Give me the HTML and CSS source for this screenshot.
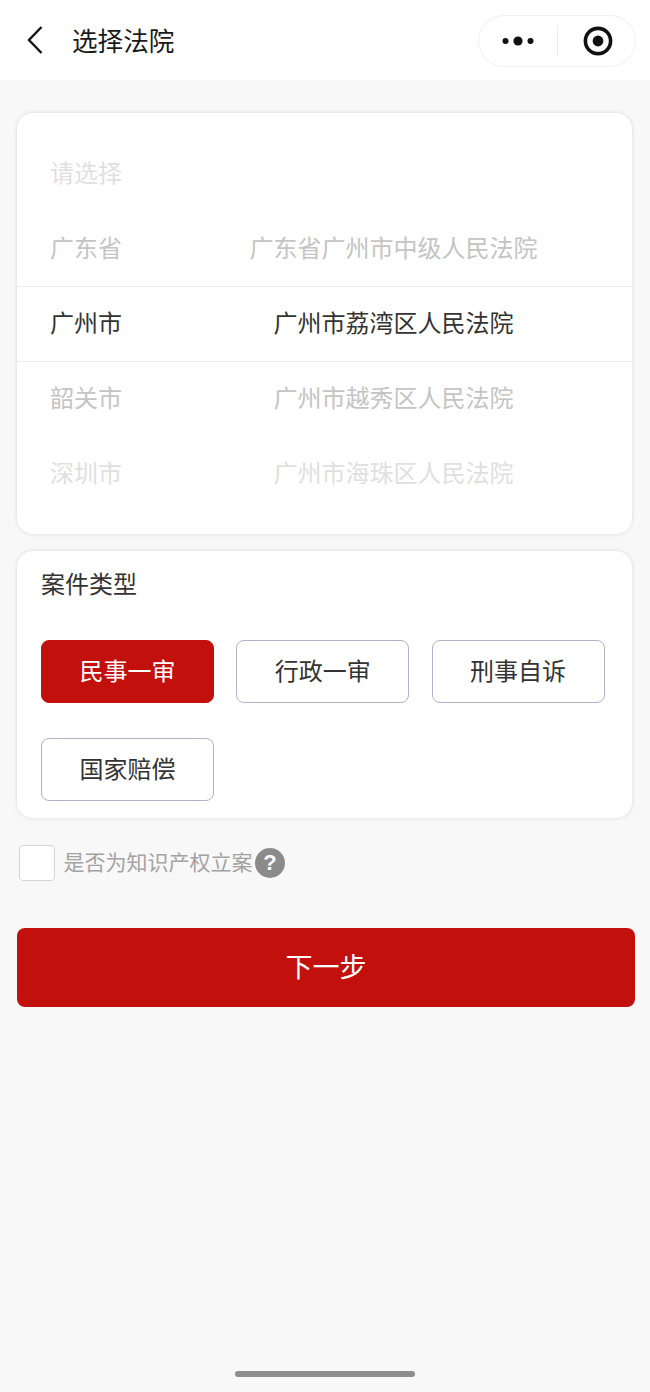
FILE: index.html
```html
<!DOCTYPE html>
<html lang="zh-CN">
<head>
<meta charset="utf-8">
<title>选择法院</title>
<link rel="stylesheet" href="styles.css">
</head>
<body>
<div class="page">
  <header class="nav">
    <svg class="back" width="18" height="30" viewBox="0 0 18 30"><path d="M15.5 2 3 15l12.500 13" fill="none" stroke="#111" stroke-width="2.4"/></svg>
    <h1 class="nav-title">选择法院</h1>
    <div class="capsule">
      <svg class="capsule-more" width="34" height="10" viewBox="0 0 34 10"><circle cx="4.500" cy="5" r="3" fill="#111"/><circle cx="17" cy="5" r="4.600" fill="#111"/><circle cx="29.500" cy="5" r="3" fill="#111"/></svg>
      <span class="capsule-line"></span>
      <svg class="capsule-close" width="30" height="30" viewBox="0 0 30 30"><circle cx="15" cy="15" r="12.600" fill="none" stroke="#111" stroke-width="3.600"/><circle cx="15" cy="15" r="5.400" fill="#111"/></svg>
    </div>
  </header>

  <main class="content">
    <section class="card picker">
      <div class="row fade-2"><span>请选择</span><span></span></div>
      <div class="row fade-1"><span>广东省</span><span>广东省广州市中级人民法院</span></div>
      <div class="row current"><span>广州市</span><span>广州市荔湾区人民法院</span></div>
      <div class="row fade-1"><span>韶关市</span><span>广州市越秀区人民法院</span></div>
      <div class="row fade-2"><span>深圳市</span><span>广州市海珠区人民法院</span></div>
    </section>

    <section class="card types">
      <h2 class="types-title">案件类型</h2>
      <div class="type-grid">
        <button class="type active">民事一审</button>
        <button class="type">行政一审</button>
        <button class="type">刑事自诉</button>
        <button class="type">国家赔偿</button>
      </div>
    </section>

    <div class="ip">
      <span class="checkbox"></span>
      <span class="ip-label">是否为知识产权立案</span>
      <span class="help">?</span>
    </div>

    <button class="next">下一步</button>
  </main>

  <div class="home-bar"></div>
</div>
</body>
</html>
```

FILE: styles.css
```css
* { box-sizing: border-box; }
html, body { margin: 0; padding: 0; }
body {
  background: #f8f8f8;
  color: #333;
  font-family: "Noto Sans CJK SC", "Noto Sans", sans-serif;
}
.page {
  width: 650px;
  height: 1392px;
  display: flex;
  flex-direction: column;
  overflow: hidden;
}
.nav {
  height: 80px;
  flex: none;
  background: #fff;
  display: flex;
  align-items: center;
  padding: 2px 14px 0 26px;
}
.back { flex: none; margin-top: -2px; }
.nav-title {
  margin: -3px 0 0 28px;
  font-size: 25.6px;
  line-height: 36px;
  font-weight: 400;
  color: #1a1a1a;
  flex: 1;
}
.capsule {
  width: 158px;
  height: 52px;
  border: 1px solid #f0f0f0;
  border-radius: 26px;
  display: flex;
  align-items: center;
  padding-left: 22px;
}
.capsule-line {
  width: 1px;
  height: 30px;
  margin-left: 22px;
  background: #ececec;
}
.capsule-close { margin-left: 25px; }
.content {
  flex: 1;
  padding: 33px 15px 0 17px;
  display: flex;
  flex-direction: column;
}
.card {
  width: 615px;
  background: #fff;
  border-radius: 16px;
  box-shadow: 0 0 4px rgba(0, 0, 0, 0.13);
}
.picker {
  height: 421px;
  padding-top: 23px;
}
.row {
  height: 75px;
  display: grid;
  grid-template-columns: 138px 1fr;
  align-items: center;
  justify-items: center;
  padding-bottom: 3px;
  font-size: 24px;
  line-height: 34px;
  color: #333;
}
.fade-1 { color: #c4c4c4; }
.fade-2 { color: #e0e0e0; }
.current {
  height: 76px;
  margin-bottom: -1px;
  padding-bottom: 5px;
  border-top: 1px solid #ececec;
  border-bottom: 1px solid #ececec;
}
.types {
  height: 267px;
  margin-top: 17px;
  padding: 15px 27px 0 24px;
}
.types-title {
  margin: 0;
  font-size: 24px;
  line-height: 34px;
  font-weight: 400;
  color: #333;
}
.type-grid {
  margin-top: 40px;
  display: grid;
  grid-template-columns: repeat(3, 173px);
  grid-auto-rows: 63px;
  column-gap: 22.3px;
  row-gap: 35px;
}
.type {
  font: inherit;
  font-size: 24px;
  color: #333;
  background: #fff;
  border: 1px solid #b4b1cc;
  border-radius: 8px;
  padding: 0 0 5px;
}
.type.active {
  background: #c2100c;
  border-color: #c2100c;
  color: #fff;
}
.ip {
  margin: 27px 0 0 2px;
  display: flex;
  align-items: center;
  height: 36px;
}
.checkbox {
  width: 36px;
  height: 36px;
  background: #fff;
  border: 1px solid #d6d6d6;
  border-radius: 4px;
}
.ip-label {
  margin: -5px 0 0 8.5px;
  font-size: 21px;
  line-height: 30px;
  color: #a3a3a3;
}
.help {
  width: 30px;
  height: 30px;
  margin: -1px 0 0 2.5px;
  border-radius: 50%;
  background: #8b8b8b;
  color: #fff;
  font-family: "Liberation Sans", sans-serif;
  font-size: 22px;
  font-weight: 700;
  line-height: 30px;
  text-align: center;
}
.next {
  width: 618px;
  height: 79px;
  margin-top: 47px;
  flex: none;
  font: inherit;
  font-size: 27px;
  color: #fff;
  background: #c2100c;
  border: 0;
  border-radius: 8px;
  padding: 0 0 4px;
}
.home-bar {
  width: 180px;
  height: 6px;
  flex: none;
  align-self: center;
  margin-bottom: 15px;
  background: #8e8e8e;
  border-radius: 3px;
}
```
